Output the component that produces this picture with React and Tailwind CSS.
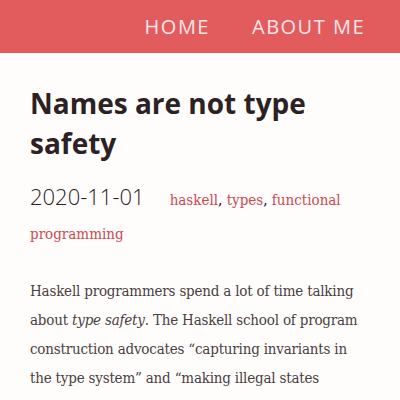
export default function App() {
  return (
    <div className="w-[400px] h-[400px] overflow-hidden bg-[#fffdfc]">
      <header className="h-[53px] bg-[#e25c5e] flex items-center justify-end pr-[35px] gap-[42px] pt-[1px]">
        <a className="text-[20px] tracking-[1.5px] text-[#fde6ea] font-['Open_Sans',sans-serif]">HOME</a>
        <a className="text-[20px] tracking-[1.5px] text-[#fde6ea] font-['Open_Sans',sans-serif]">ABOUT ME</a>
      </header>
      <main className="px-[30px] pt-[30px]">
        <h1 className="text-[28px] leading-[40px] font-bold text-[#2d2124] font-['Open_Sans',sans-serif]">
          Names are not type safety
        </h1>
        <div className="mt-[20px] leading-[34px] text-[15px] font-['DejaVu_Serif',serif] [font-stretch:condensed]">
          <span className="text-[22px] leading-[20px] font-light text-[#2d2124] font-['Open_Sans',sans-serif] [font-stretch:normal] mr-[25px]">2020-11-01</span>
          <a className="text-[#cc4a50]">haskell</a>, <a className="text-[#cc4a50]">types</a>, <a className="text-[#cc4a50]">functional programming</a>
        </div>
        <p className="mt-[26px] text-[15px] leading-[29px] text-[#4a3f42] font-['DejaVu_Serif',serif] [font-stretch:condensed] tracking-[-0.2px]">
          Haskell programmers spend a lot of time talking about <em>type safety</em>. The Haskell school of program construction advocates “capturing invariants in the type system” and “making illegal states unrepresentable,” both of which sound like compelling goals.
        </p>
      </main>
    </div>
  );
}
